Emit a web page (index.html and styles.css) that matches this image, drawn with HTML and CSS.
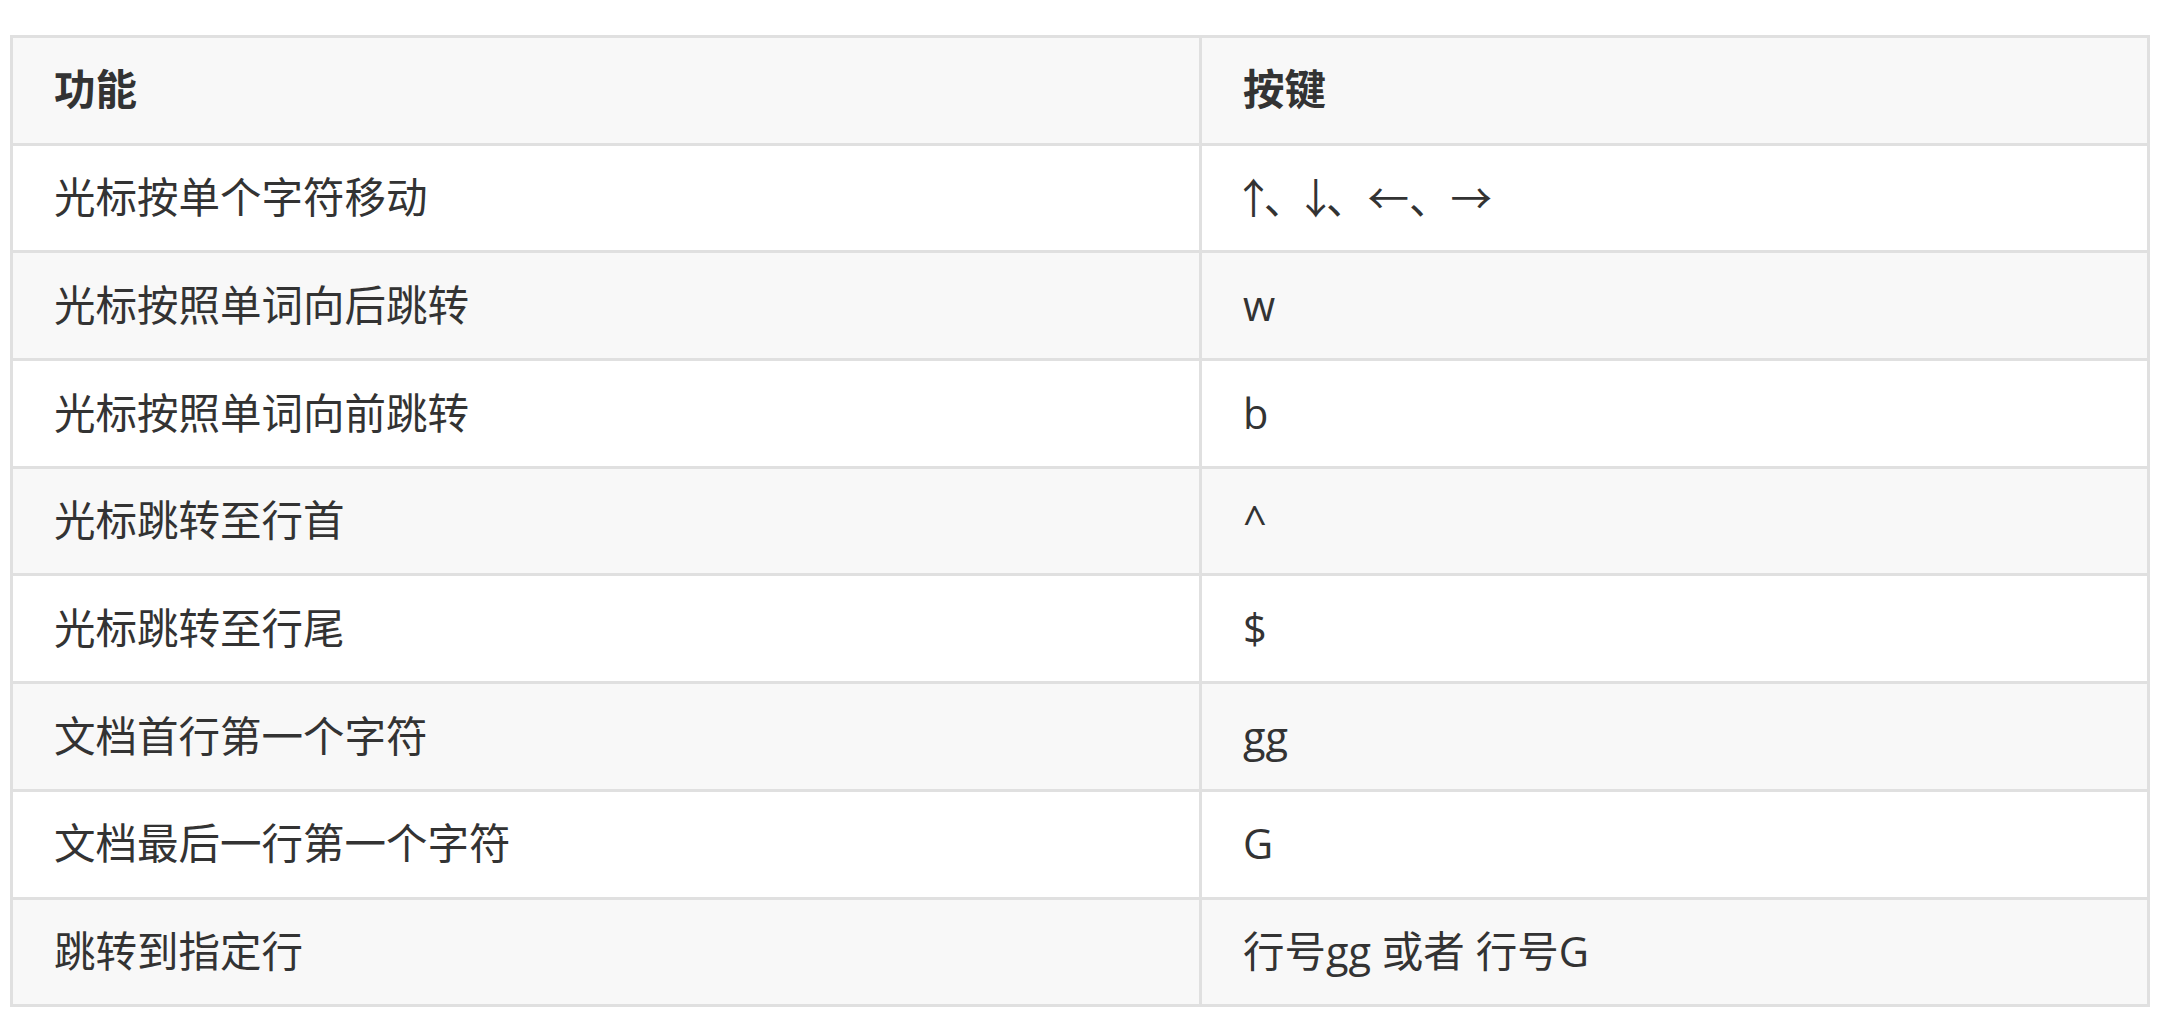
FILE: index.html
```html
<!DOCTYPE html>
<html lang="zh-CN">
<head>
<meta charset="utf-8">
<link rel="stylesheet" href="styles.css">
</head>
<body>
<table class="keys">
  <thead>
    <tr><th class="c1">功能</th><th class="c2">按键</th></tr>
  </thead>
  <tbody>
    <tr><td>光标按单个字符移动</td><td><span class="arrow narrow">↑</span>、<span class="arrow narrow">↓</span>、<span class="arrow">←</span>、<span class="arrow">→</span></td></tr>
    <tr><td>光标按照单词向后跳转</td><td>w</td></tr>
    <tr><td>光标按照单词向前跳转</td><td>b</td></tr>
    <tr><td>光标跳转至行首</td><td>^</td></tr>
    <tr><td>光标跳转至行尾</td><td>$</td></tr>
    <tr><td>文档首行第一个字符</td><td>gg</td></tr>
    <tr><td>文档最后一行第一个字符</td><td>G</td></tr>
    <tr><td>跳转到指定行</td><td>行号gg 或者 行号G</td></tr>
  </tbody>
</table>
</body>
</html>
```
FILE: styles.css
```css
html, body {
  margin: 0;
  padding: 0;
  background: #ffffff;
}
body {
  padding: 35px 0 0 10px;
  font-family: "Open Sans", "Noto Sans CJK SC", sans-serif;
  color: #333333;
}
.keys {
  border-collapse: separate;
  border-spacing: 0;
  width: 2140px;
  table-layout: fixed;
  border-top: 3px solid #e0e0e0;
  border-left: 3px solid #e0e0e0;
}
.keys th, .keys td {
  box-sizing: border-box;
  height: 107.7px;
  padding: 0 0 0 41px;
  border-right: 3px solid #e0e0e0;
  border-bottom: 3px solid #e0e0e0;
  font-size: 41.5px;
  line-height: 1.2;
  text-align: left;
  vertical-align: middle;
  white-space: nowrap;
}
.keys th {
  font-weight: 700;
  background: #f8f8f8;
}
.keys .c1 { width: 1189px; }
.keys .c2 { width: 948px; }
.keys tbody tr:nth-child(odd) td { background: #ffffff; }
.keys tbody tr:nth-child(even) td { background: #f8f8f8; }
.arrow {
  font-family: "Noto Sans CJK SC", sans-serif;
}
.arrow.narrow {
  margin: 0 -0.25em;
}
```
